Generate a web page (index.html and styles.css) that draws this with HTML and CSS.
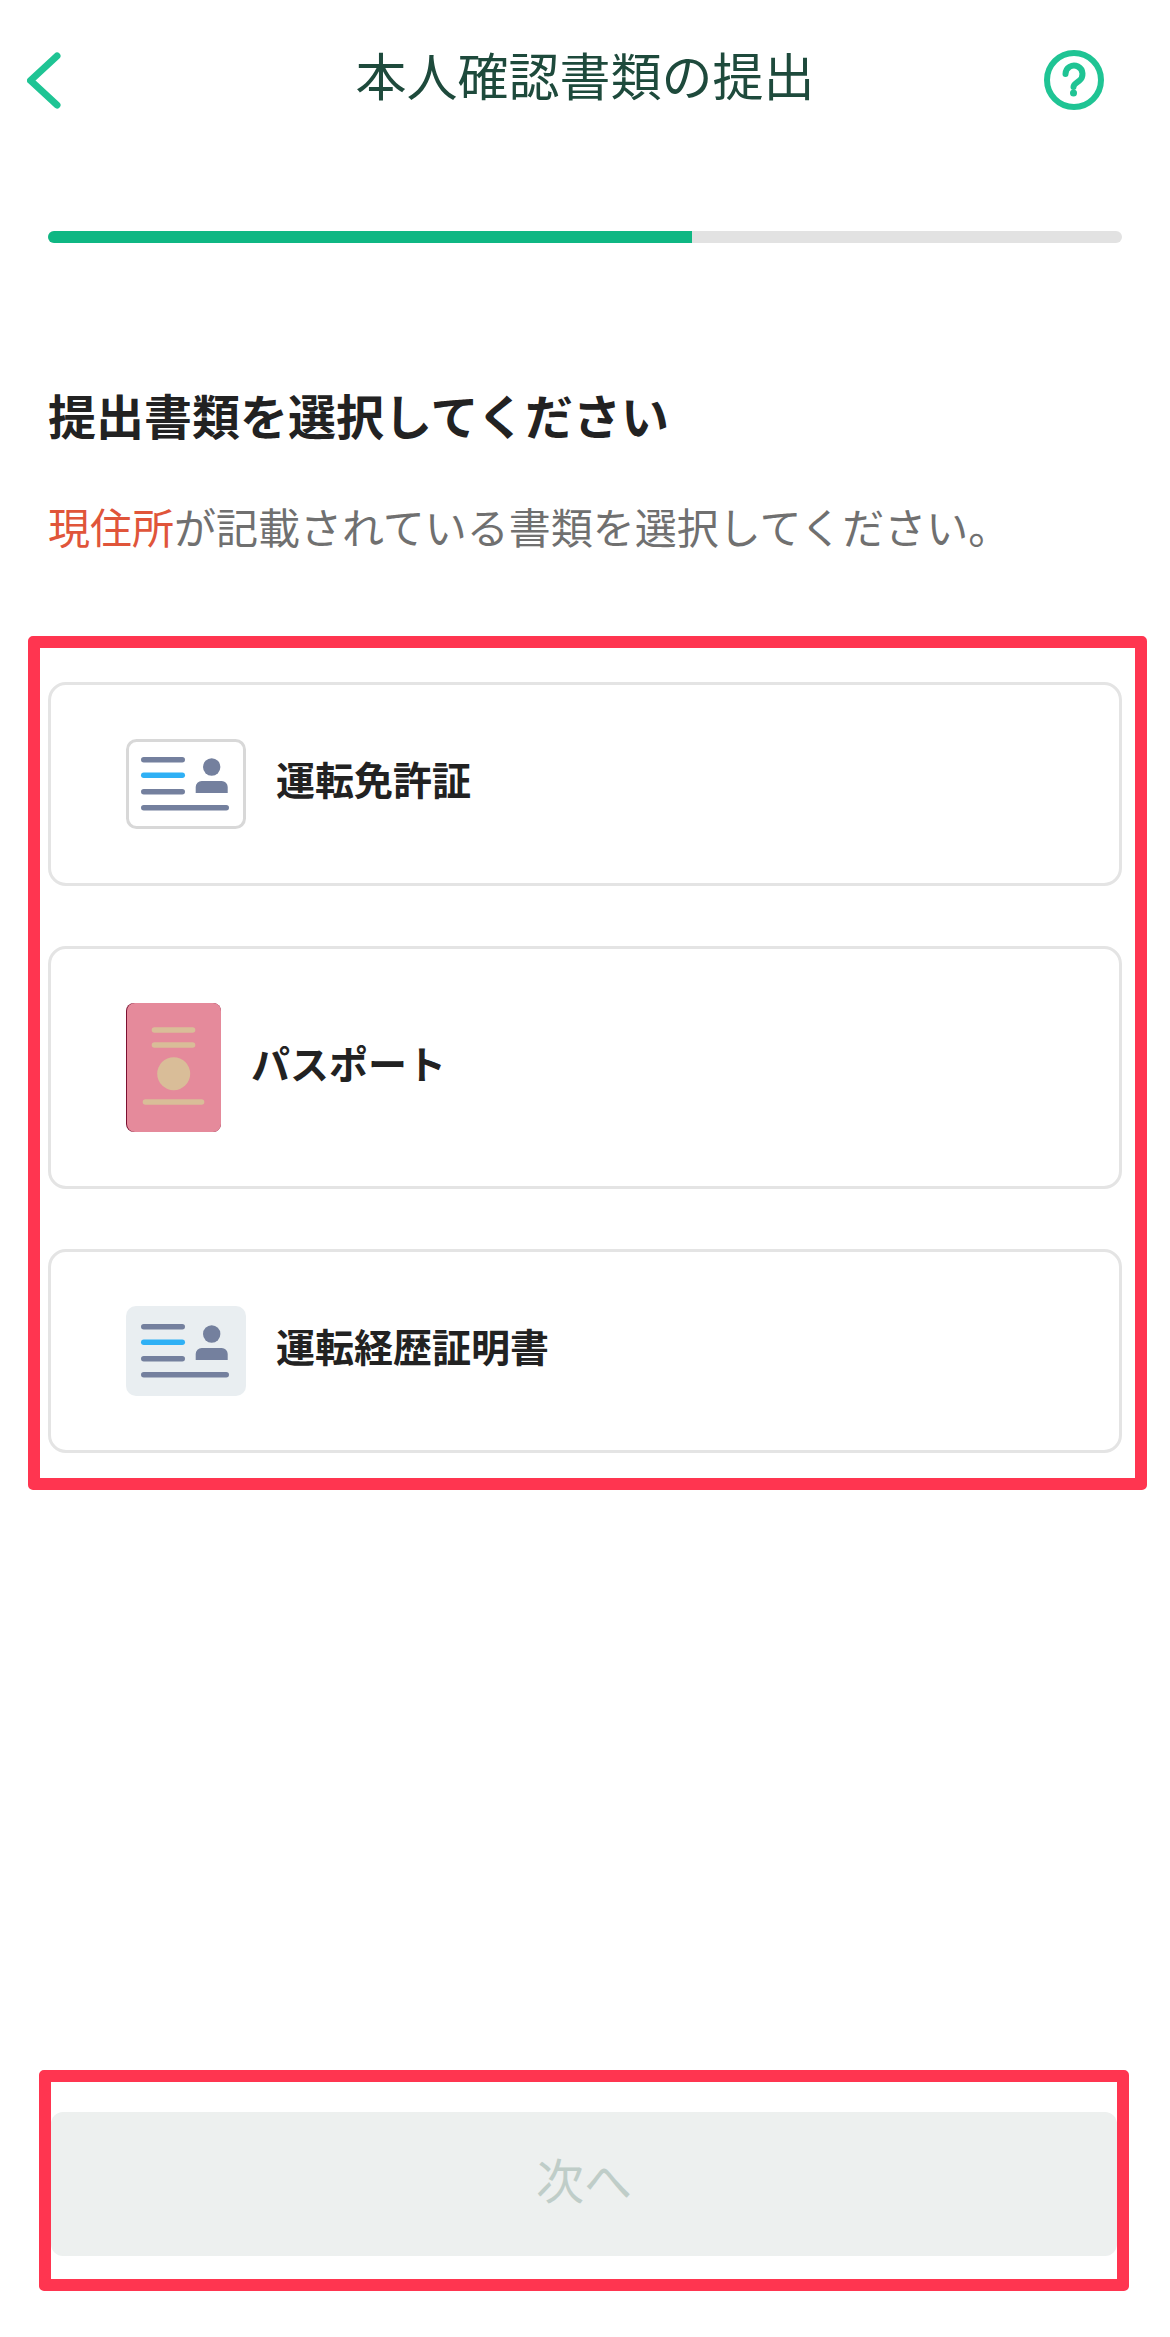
FILE: index.html
```html
<!DOCTYPE html>
<html lang="ja">
<head>
    <meta charset="UTF-8">
    <meta name="viewport" content="width=device-width, initial-scale=1.0">
    <title>本人確認書類の提出</title>
    <link rel="stylesheet" href="styles.css">
</head>
<body>
    <div class="header">
        <svg class="back" xmlns="http://www.w3.org/2000/svg" viewBox="0 0 34 57">
            <path d="M30 4L3.5 28.5 30 53"/>
        </svg>
        <div class="title">本人確認書類の提出</div>
        <svg class="help" xmlns="http://www.w3.org/2000/svg" viewBox="0 0 60 60">
            <circle cx="30" cy="30" r="27"/>
            <path d="M21.5 24a8.5 8.5 0 1 1 13.4 7c-3 2-5.4 3.2-5.4 6"/>
            <circle class="dot" cx="29.5" cy="43" r="3.5"/>
        </svg>
    </div>

    <div class="progress">
        <div class="progress-fill"></div>
    </div>

    <h1 class="heading">提出書類を選択してください</h1>
    <p class="lead"><span class="accent">現住所</span>が記載されている書類を選択してください。</p>

    <div class="doc-frame">
        <div class="doc-card">
            <svg class="doc-icon" xmlns="http://www.w3.org/2000/svg" viewBox="0 0 120 90">
                <rect class="id-plate" x="1.5" y="1.5" width="117" height="87" rx="9"/>
                <rect class="id-line" x="15" y="18" width="44" height="5.5" rx="2.75"/>
                <rect class="id-line blue" x="15" y="33.5" width="44" height="5.5" rx="2.75"/>
                <rect class="id-line" x="15" y="50" width="44" height="5.5" rx="2.75"/>
                <rect class="id-line" x="15" y="66" width="88" height="5.5" rx="2.75"/>
                <circle class="id-line" cx="85.7" cy="28" r="8.7"/>
                <path class="id-line" d="M69.7 54V48a6 6 0 0 1 6-6h20a6 6 0 0 1 6 6v6z"/>
            </svg>
            <span class="doc-name">運転免許証</span>
        </div>
        <div class="doc-card">
            <svg class="doc-icon" xmlns="http://www.w3.org/2000/svg" viewBox="0 0 95 129">
                <rect class="pass-edge" x="0" y="0" width="95" height="129" rx="8"/>
                <rect class="pass-cover" x="1" y="0" width="94" height="129" rx="8"/>
                <rect class="pass-gold" x="25.7" y="24.2" width="43.6" height="5.5" rx="2.75"/>
                <rect class="pass-gold" x="25.7" y="39.2" width="43.6" height="5.5" rx="2.75"/>
                <circle class="pass-gold" cx="47.7" cy="70.7" r="16.5"/>
                <rect class="pass-gold" x="16.7" y="96.2" width="61.6" height="5.5" rx="2.75"/>
            </svg>
            <span class="doc-name">パスポート</span>
        </div>
        <div class="doc-card">
            <svg class="doc-icon" xmlns="http://www.w3.org/2000/svg" viewBox="0 0 120 90">
                <rect class="id-plate-grey" x="0" y="0" width="120" height="90" rx="10"/>
                <rect class="id-line" x="15" y="18" width="44" height="5.5" rx="2.75"/>
                <rect class="id-line blue" x="15" y="33.5" width="44" height="5.5" rx="2.75"/>
                <rect class="id-line" x="15" y="50" width="44" height="5.5" rx="2.75"/>
                <rect class="id-line" x="15" y="66" width="88" height="5.5" rx="2.75"/>
                <circle class="id-line" cx="85.7" cy="28" r="8.7"/>
                <path class="id-line" d="M69.7 54V48a6 6 0 0 1 6-6h20a6 6 0 0 1 6 6v6z"/>
            </svg>
            <span class="doc-name">運転経歴証明書</span>
        </div>
    </div>

    <div class="next-frame">
        <button class="next-button" disabled>次へ</button>
    </div>
</body>
</html>
```
FILE: styles.css
```css
* {
    margin: 0;
    padding: 0;
    box-sizing: border-box;
    font-family: "Noto Sans CJK JP", "Noto Sans", sans-serif;
}

body {
    background: #ffffff;
    width: 1170px;
}

/* Header */
.header {
    display: grid;
    grid-template-columns: 1fr auto 1fr;
    align-items: center;
    height: 60px;
    margin-top: 50px;
}

.back {
    width: 34px;
    height: 57px;
    margin-left: 27px;
    fill: none;
    stroke: #1fc494;
    stroke-width: 7;
    stroke-linecap: round;
    stroke-linejoin: round;
}

.title {
    padding-bottom: 12px;
    font-size: 51px;
    line-height: 48px;
    color: #1e4a3c;
}

.help {
    width: 60px;
    height: 60px;
    margin-left: auto;
    margin-right: 66px;
    fill: none;
    stroke: #1fc494;
    stroke-width: 6;
    stroke-linecap: round;
}

.help .dot {
    fill: #1fc494;
    stroke: none;
}

/* Progress */
.progress {
    height: 12px;
    margin: 121px 48px 0;
    background: #e2e2e2;
    border-radius: 6px;
    overflow: hidden;
}

.progress-fill {
    width: 60%;
    height: 100%;
    background: #0fb783;
}

/* Intro text */
.heading {
    margin: 138px 48px 0;
    font-size: 48px;
    font-weight: 700;
    line-height: 66px;
    color: #222222;
}

.lead {
    margin: 49px 48px 0;
    font-size: 42px;
    line-height: 60px;
    color: #707070;
}

.accent {
    color: #e0553a;
}

/* Document choices */
.doc-frame {
    display: flex;
    flex-direction: column;
    gap: 60px;
    width: 1119px;
    margin: 80px 0 0 28px;
    padding: 34px 13px 25px 8px;
    border: 12px solid #ff3550;
    border-radius: 5px;
}

.doc-card {
    display: flex;
    align-items: center;
    gap: 30px;
    padding: 54px 0 54px 75px;
    border: 3px solid #e4e4e4;
    border-radius: 18px;
}

.doc-icon {
    display: block;
    flex: none;
    height: auto;
}

.doc-card:nth-child(1) .doc-icon,
.doc-card:nth-child(3) .doc-icon {
    width: 120px;
}

.doc-card:nth-child(2) .doc-icon {
    width: 95px;
}

.doc-name {
    padding-bottom: 12px;
    font-size: 39px;
    font-weight: 700;
    line-height: 50px;
    color: #222222;
}

.id-plate {
    fill: #ffffff;
    stroke: #d8d8d8;
    stroke-width: 3;
}

.id-plate-grey {
    fill: #e9eef1;
}

.id-line {
    fill: #74809e;
}

.id-line.blue {
    fill: #2fb0f5;
}

.pass-edge {
    fill: #7a1030;
}

.pass-cover {
    fill: #e58a9b;
}

.pass-gold {
    fill: #d9bd98;
}

/* Footer button */
.next-frame {
    width: 1090px;
    margin: 580px 0 46px 39px;
    padding: 30px 0 23px;
    border: 12px solid #ff3550;
    border-radius: 5px;
}

.next-button {
    display: block;
    width: 100%;
    height: 144px;
    padding-bottom: 12px;
    background: #edf0ef;
    border: none;
    border-radius: 12px;
    font-size: 48px;
    color: #bfcdc8;
}
```
